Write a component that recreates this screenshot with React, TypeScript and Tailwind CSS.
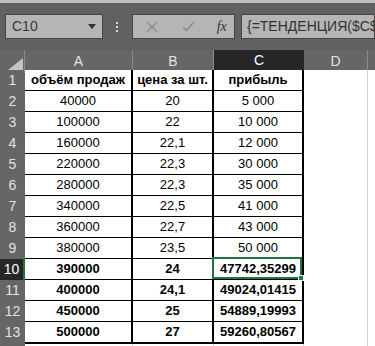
import React from "react";

const rows: string[][] = [
  ["объём продаж", "цена за шт.", "прибыль"],
  ["40000", "20", "5 000"],
  ["100000", "22", "10 000"],
  ["160000", "22,1", "12 000"],
  ["220000", "22,3", "30 000"],
  ["280000", "22,3", "35 000"],
  ["340000", "22,5", "41 000"],
  ["360000", "22,7", "43 000"],
  ["380000", "23,5", "50 000"],
  ["390000", "24", "47742,35299"],
  ["400000", "24,1", "49024,01415"],
  ["450000", "25", "54889,19993"],
  ["500000", "27", "59260,80567"],
];

const gridCols = "grid grid-cols-[25px_108px_81px_90px_64px_7px]";

const App = () => {
  return (
    <div className="w-[375px] h-[346px] overflow-hidden bg-[#616161] font-['Liberation_Sans',Arial,sans-serif]">
      <div className="h-[3px] bg-[#bdbdbd]" />

      {/* formula bar */}
      <div className="h-[47px] pt-[11px] flex items-start">
        <div className="ml-[5px] w-[102px] h-[25px] bg-[#b5b5b5] border border-[#454545] flex items-center justify-between pl-[6px] pr-[6px]">
          <span className="text-[14px] text-[#3a3a3a]">C10</span>
          <svg width="8" height="5" viewBox="0 0 8 5">
            <polygon points="0,0 8,0 4,5" fill="#333" />
          </svg>
        </div>
        <div className="w-[30px] h-[25px] flex flex-col items-center justify-center gap-[2px]">
          <div className="w-[2px] h-[2px] bg-[#dcdcdc]" />
          <div className="w-[2px] h-[2px] bg-[#dcdcdc]" />
          <div className="w-[2px] h-[2px] bg-[#dcdcdc]" />
        </div>
        <div className="w-[108px] h-[25px] bg-[#b5b5b5] border border-[#454545] flex items-center">
          <svg width="12" height="12" viewBox="0 0 12 12" className="ml-[13px]">
            <path d="M1 1 L11 11 M11 1 L1 11" stroke="#8a8a8a" strokeWidth="1.3" />
          </svg>
          <svg width="13" height="11" viewBox="0 0 13 11" className="ml-[24px]">
            <path d="M1 6 L4.5 9.5 L12 1" stroke="#8a8a8a" strokeWidth="1.5" fill="none" />
          </svg>
          <span className="ml-[22px] text-[14px] italic font-['Liberation_Serif',serif] text-[#333] leading-none">
            fx
          </span>
        </div>
        <div className="ml-[6px] w-[140px] h-[25px] bg-[#b5b5b5] border border-[#454545] flex items-center pl-[5px] overflow-hidden whitespace-nowrap">
          <span className="text-[14px] text-[#333]">{"{=ТЕНДЕНЦИЯ($C$2:$C$9;$A$2:$A$9;A10:A13)}"}</span>
        </div>
      </div>

      {/* column headers */}
      <div className={`${gridCols} h-[20px] bg-[#666666] text-[14px] text-[#e2e2e2]`}>
        <div className="border-r border-[#8c8c8c] relative">
          <svg width="15" height="12" viewBox="0 0 15 12" className="absolute right-[1px] bottom-[3px]">
            <polygon points="15,0 15,12 0,12" fill="#c4c4c4" />
          </svg>
        </div>
        <div className="border-r border-[#8c8c8c] flex items-center justify-center">A</div>
        <div className="border-r border-[#8c8c8c] flex items-center justify-center">B</div>
        <div className="bg-[#262626] text-white border-b-2 border-[#217346] flex items-center justify-center">C</div>
        <div className="border-r border-[#8c8c8c] flex items-center justify-center">D</div>
        <div />
      </div>

      {/* rows */}
      {rows.map((row, i) => {
        const selected = i === 9;
        const bold = i === 0 || i >= 9;
        return (
          <div key={i} className={`${gridCols} h-[21px] text-[13px]`}>
            <div
              className={
                selected
                  ? "bg-[#262626] text-white border-r-2 border-[#217346] border-b border-b-[#8a8a8a] flex items-center justify-center text-[14px]"
                  : "bg-[#666666] text-[#e2e2e2] border-b border-[#8a8a8a] flex items-center justify-center text-[14px]"
              }
            >
              {i + 1}
            </div>
            {row.map((val, j) => (
              <div
                key={j}
                className={`relative bg-white border-r-2 border-b-2 border-black flex items-center justify-center text-black whitespace-nowrap ${
                  bold ? "font-bold" : ""
                }`}
              >
                {val}
                {selected && j === 2 && (
                  <div className="absolute -left-[2px] -top-[2px] right-0 bottom-0 border-2 border-[#217346] z-10">
                    <div className="absolute -right-[4px] -bottom-[4px] w-[6px] h-[6px] bg-[#217346] border border-white" />
                  </div>
                )}
              </div>
            ))}
            <div className="bg-white border-r border-b border-[#d4d4d4]" />
            <div className="bg-white border-b border-[#d4d4d4]" />
          </div>
        );
      })}
      <div className={`${gridCols} h-[10px]`}>
        <div className="bg-[#666666]" />
        <div className="bg-white border-r border-[#d4d4d4]" />
        <div className="bg-white border-r border-[#d4d4d4]" />
        <div className="bg-white border-r border-[#d4d4d4]" />
        <div className="bg-white border-r border-[#d4d4d4]" />
        <div className="bg-white" />
      </div>
    </div>
  );
};

export default App;
